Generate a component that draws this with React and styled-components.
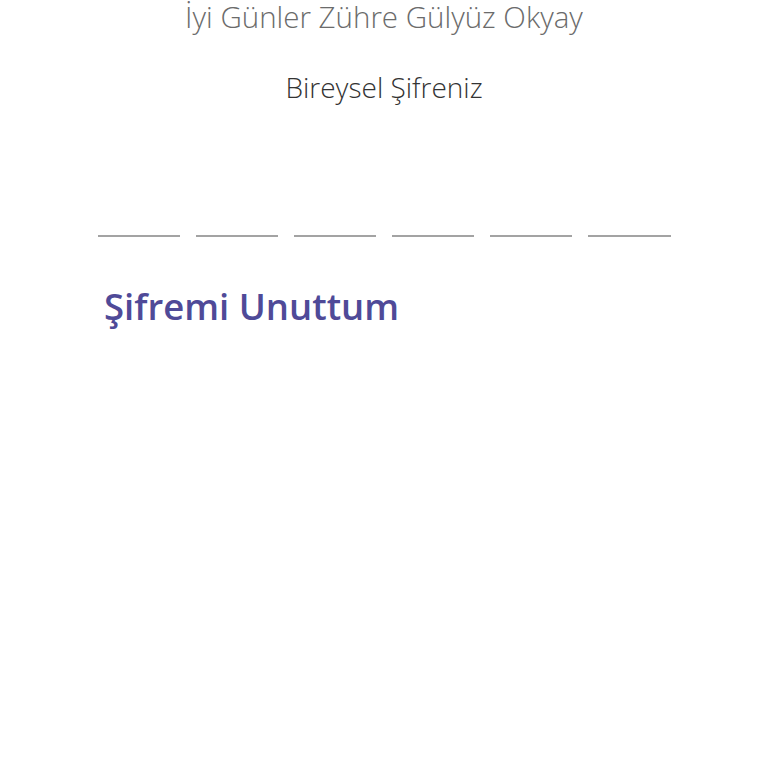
import styled, { createGlobalStyle } from "styled-components";

const GlobalStyle = createGlobalStyle`
  html, body {
    margin: 0;
    padding: 0;
    background: #ffffff;
  }
  body {
    font-family: "Open Sans", "Noto Sans", "Liberation Sans", sans-serif;
  }
`;

const Page = styled.div`
  width: 768px;
  height: 768px;
  display: flex;
  flex-direction: column;
  align-items: center;
  overflow: hidden;
`;

const Greeting = styled.h1`
  margin: 0;
  font-size: 29.5px;
  font-weight: 300;
  line-height: 33px;
  color: #6b6b6b;
  text-align: center;
`;

const Label = styled.h2`
  margin: 37px 0 0;
  font-size: 28px;
  font-weight: 300;
  line-height: 34px;
  color: #333333;
  text-align: center;
`;

const PinRow = styled.div`
  margin-top: 131px;
  width: 573px;
  display: flex;
  gap: 16px;
`;

const PinSlot = styled.div`
  flex: 1;
  height: 2px;
  background: #a3a3a3;
`;

const ForgotLink = styled.a`
  align-self: flex-start;
  margin: 47px 0 0 104px;
  font-size: 36.5px;
  font-weight: 600;
  line-height: 44px;
  color: #4f4a98;
  text-decoration: none;
  cursor: pointer;
`;

const App = () => {
  const slots = [0, 1, 2, 3, 4, 5];

  return (
    <>
      <GlobalStyle />
      <Page>
        <Greeting>İyi Günler Zühre Gülyüz Okyay</Greeting>
        <Label>Bireysel Şifreniz</Label>
        <PinRow>
          {slots.map((i) => (
            <PinSlot key={i} />
          ))}
        </PinRow>
        <ForgotLink>Şifremi Unuttum</ForgotLink>
      </Page>
    </>
  );
};

export default App;
